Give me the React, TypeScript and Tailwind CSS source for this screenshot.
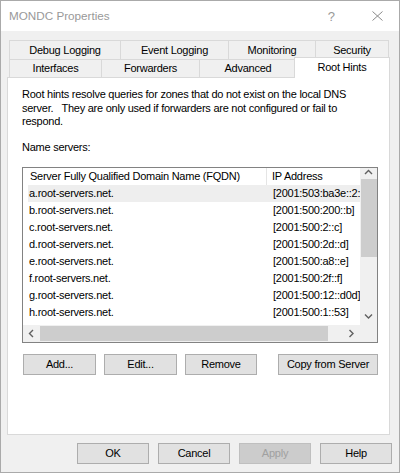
import React from 'react';

const servers = [
  ['a.root-servers.net.', '[2001:503:ba3e::2:30]'],
  ['b.root-servers.net.', '[2001:500:200::b]'],
  ['c.root-servers.net.', '[2001:500:2::c]'],
  ['d.root-servers.net.', '[2001:500:2d::d]'],
  ['e.root-servers.net.', '[2001:500:a8::e]'],
  ['f.root-servers.net.', '[2001:500:2f::f]'],
  ['g.root-servers.net.', '[2001:500:12::d0d]'],
  ['h.root-servers.net.', '[2001:500:1::53]'],
];

function Chevron({ dir }: { dir: 'up' | 'down' | 'left' | 'right' }) {
  const pts = {
    up: '1,5 4.5,1.5 8,5',
    down: '1,1.5 4.5,5 8,1.5',
    left: '5,1 1.5,4.5 5,8',
    right: '1.5,1 5,4.5 1.5,8',
  }[dir];
  const vertical = dir === 'up' || dir === 'down';
  return (
    <svg width={vertical ? 9 : 7} height={vertical ? 7 : 9} viewBox={vertical ? '0 0 9 7' : '0 0 7 9'}>
      <polyline points={pts} fill="none" stroke="#606060" strokeWidth="1.4" />
    </svg>
  );
}

function Button({ label, className = '', disabled = false }: { label: string; className?: string; disabled?: boolean }) {
  return (
    <div
      className={
        'flex h-[21px] items-center justify-center border ' +
        (disabled ? 'border-[#bfbfbf] bg-[#cccccc] text-[#a0a0a0] ' : 'border-[#adadad] bg-[#e1e1e1] text-black ') +
        className
      }
    >
      {label}
    </div>
  );
}

export default function App() {
  return (
    <div className="flex h-[473px] w-[400px] flex-col border border-[#aaaaaa] bg-[#f0f0f0] font-['Liberation_Sans',Arial,sans-serif] text-[11px] leading-none tracking-[-0.25px] text-black">
      {/* title bar */}
      <div className="flex h-[30px] items-center bg-white pl-[8px] tracking-normal text-[#999999]">
        <span className="text-[11.7px]">MONDC Properties</span>
        <span className="ml-auto mr-[37px] text-[13px]">?</span>
        <svg width="11" height="10" viewBox="0 0 11 10" className="mr-[16px]">
          <path d="M0.5 0.5 L10.5 9.5 M10.5 0.5 L0.5 9.5" stroke="#8a8a8a" strokeWidth="1" />
        </svg>
      </div>

      <div className="flex flex-col pl-[6px] pt-[9px]">
        {/* tabs */}
        <div className="ml-[2px] flex h-[19px]">
          {[
            ['Debug Logging', 'w-[111px]'],
            ['Event Logging', 'w-[108px]'],
            ['Monitoring', 'w-[87px]'],
          ].map(([t, w]) => (
            <div key={t} className={`flex items-center justify-center border-l border-t border-[#d9d9d9] ${w}`}>
              {t}
            </div>
          ))}
          <div className="flex w-[74px] items-center justify-center border-x border-t border-[#d9d9d9]">Security</div>
        </div>
        <div className="ml-[2px] flex h-[18px] items-end">
          <div className="flex h-[18px] w-[92px] items-center justify-center border-l border-t border-[#d9d9d9]">Interfaces</div>
          <div className="flex h-[18px] w-[98px] items-center justify-center border-l border-t border-[#d9d9d9]">Forwarders</div>
          <div className="flex h-[18px] w-[97px] items-center justify-center border-l border-t border-[#d9d9d9]">Advanced</div>
          <div className="relative z-10 -mb-[1px] -ml-[2px] flex h-[21px] w-[96px] items-center justify-center border-x border-t border-[#d9d9d9] bg-white pb-[2px]">
            Root Hints
          </div>
        </div>

        {/* panel */}
        <div className="flex h-[358px] w-[383px] flex-col border border-[#d9d9d9] bg-white pl-[14px] pt-[10px]">
          <div className="leading-[13.5px]">
            <div className="whitespace-pre">Root hints resolve queries for zones that do not exist on the local DNS</div>
            <div className="whitespace-pre">server.   They are only used if forwarders are not configured or fail to</div>
            <div className="whitespace-pre">respond.</div>
          </div>
          <div className="mt-[12px] leading-[13.5px]">Name servers:</div>

          {/* list */}
          <div className="mt-[13px] flex h-[176px] w-[356px] flex-col border border-[#828282]">
            <div className="flex h-[157px]">
              <div className="flex-1 overflow-hidden">
                <div className="flex h-[17px] items-center whitespace-nowrap">
                  <div className="flex h-full w-[244px] shrink-0 items-center border-r border-[#e5e5e5] pl-[7px]">
                    Server Fully Qualified Domain Name (FQDN)
                  </div>
                  <div className="pl-[5px]">IP Address</div>
                </div>
                {servers.map(([name, ip], i) => (
                  <div
                    key={name}
                    className={`ml-[5px] flex h-[17px] items-center whitespace-nowrap ${i === 0 ? 'bg-[#eeeeee]' : ''}`}
                  >
                    <div className="w-[245px] shrink-0 pl-[1px]">{name}</div>
                    <div>{ip}</div>
                  </div>
                ))}
              </div>
              <div className="flex w-[17px] flex-col bg-[#f0f0f0]">
                <div className="flex h-[11px] items-start justify-center pt-[1px]">
                  <Chevron dir="up" />
                </div>
                <div className="ml-[1px] h-[78px] bg-[#cdcdcd]" />
                <div className="flex-1" />
                <div className="flex h-[17px] items-center justify-center">
                  <Chevron dir="down" />
                </div>
              </div>
            </div>
            <div className="flex h-[17px]">
              <div className="flex flex-1 items-center bg-[#f0f0f0]">
                <div className="flex h-full w-[17px] items-center justify-center">
                  <Chevron dir="left" />
                </div>
                <div className="h-[15px] w-[288px] bg-[#cdcdcd]" />
                <div className="flex-1" />
                <div className="flex h-full w-[17px] items-center justify-center">
                  <Chevron dir="right" />
                </div>
              </div>
              <div className="w-[17px] bg-[#f0f0f0]" />
            </div>
          </div>

          {/* list buttons */}
          <div className="mt-[11px] flex w-[356px] pl-[1px]">
            <Button label="Add..." className="w-[73px]" />
            <Button label="Edit..." className="ml-[8px] w-[73px]" />
            <Button label="Remove" className="ml-[8px] w-[72px]" />
            <Button label="Copy from Server" className="ml-auto w-[100px]" />
          </div>
        </div>

        {/* dialog buttons */}
        <div className="mt-[8px] flex w-[385px] justify-end gap-[9px]">
          <Button label="OK" className="w-[72px]" />
          <Button label="Cancel" className="w-[72px]" />
          <Button label="Apply" className="w-[72px]" disabled />
          <Button label="Help" className="w-[72px]" />
        </div>
      </div>
    </div>
  );
}
